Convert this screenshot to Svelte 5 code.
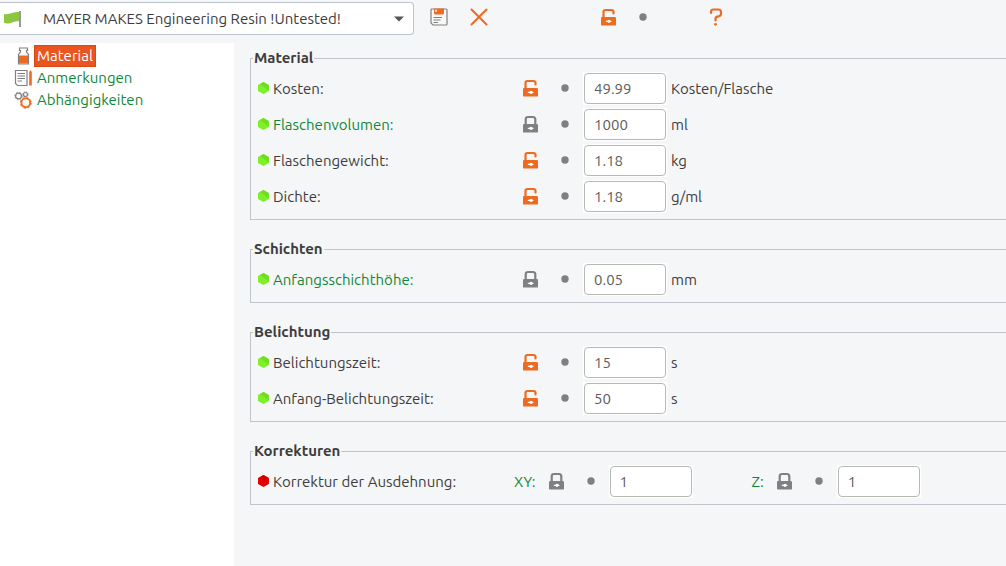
<script>
  const groups = [
    {
      title: 'Material',
      rows: [
        { name: 'Kosten:', fields: [{ id: 'cost', value: '49.99', open: true, unit: 'Kosten/Flasche' }] },
        { name: 'Flaschenvolumen:', system: true, fields: [{ id: 'volume', value: '1000', unit: 'ml' }] },
        { name: 'Flaschengewicht:', fields: [{ id: 'weight', value: '1.18', open: true, unit: 'kg' }] },
        { name: 'Dichte:', fields: [{ id: 'density', value: '1.18', open: true, unit: 'g/ml' }] }
      ]
    },
    {
      title: 'Schichten',
      rows: [{ name: 'Anfangsschichthöhe:', system: true, fields: [{ id: 'layer', value: '0.05', unit: 'mm' }] }]
    },
    {
      title: 'Belichtung',
      rows: [
        { name: 'Belichtungszeit:', fields: [{ id: 'exposure', value: '15', open: true, unit: 's' }] },
        { name: 'Anfang-Belichtungszeit:', fields: [{ id: 'initial', value: '50', open: true, unit: 's' }] }
      ]
    },
    {
      title: 'Korrekturen',
      rows: [
        {
          name: 'Korrektur der Ausdehnung:',
          expert: true,
          fields: [
            { id: 'xy', axis: 'XY:', value: '1' },
            { id: 'z', axis: 'Z:', value: '1' }
          ]
        }
      ]
    }
  ];
  const pages = ['Material', 'Anmerkungen', 'Abhängigkeiten'];
  let page = $state('Material');
</script>

{#snippet lock(open)}
  <svg class="lock" class:open width="16" height="18" viewBox="0 0 16 18" aria-hidden="true">
    {#if open}
      <path d="M2.5 9V4Q2.5 2 4.5 2H10.5Q12.5 2 12.5 4V5.5" fill="none" stroke="currentColor" stroke-width="2.2" stroke-linecap="round" />
    {:else}
      <path d="M2.7 9V4.4Q2.7 2 5.1 2H9.9Q12.3 2 12.3 4.4V9" fill="none" stroke="currentColor" stroke-width="2.2" />
    {/if}
    <rect x="0" y="9" width="15" height="8.6" rx="1.2" fill="currentColor" />
    <path d="M5.3 13.3H10" stroke="#fff" stroke-width="1.2" stroke-linecap="round" />
    <circle cx="8" cy="13.3" r="1.6" fill="#fff" />
  </svg>
{/snippet}

{#snippet control(open)}
  <button type="button" class="icon" aria-label="Systemwert">{@render lock(open)}</button>
  <button type="button" class="icon dot" aria-label="Zurücksetzen"><svg width="8" height="8" viewBox="0 0 8 8"><circle cx="4" cy="4" r="3.7" fill="#808080" /></svg></button>
{/snippet}

<div class="app">
  <header>
    <div class="preset">
      <svg class="flag" width="18" height="18" viewBox="0 0 18 18" aria-hidden="true">
        <path d="M0 4Q4 4.5 8 3T15 2V11Q11 11 8 12.5T0 13Z" fill="#8dc63f" />
        <path d="M16 1V17" stroke="#808080" stroke-width="1.6" />
      </svg>
      <select aria-label="Materialprofil">
        <option>MAYER MAKES Engineering Resin !Untested!</option>
      </select>
      <svg class="arrow" width="10" height="6" viewBox="0 0 10 6" aria-hidden="true"><path d="M0 .5H10L5 5.5Z" fill="#555" /></svg>
    </div>
    <button type="button" class="icon save" aria-label="Speichern">
      <svg width="18" height="18" viewBox="0 0 18 18">
        <path d="M2 1H16Q17 1 17 2V16Q17 17 16 17H3L1 15V2Q1 1 2 1Z" fill="#f8f8f9" stroke="#808080" stroke-width="1.2" />
        <path d="M4 .5H14V5Q14 6.5 12.5 6.5H5.5Q4 6.5 4 5Z" fill="#ed6b21" />
        <path d="M6 1.5V4" stroke="#fff" stroke-width="1.3" />
        <path d="M3.5 9.5H12M3.5 12H10.5M3.5 14.5H8" stroke="#808080" />
      </svg>
    </button>
    <button type="button" class="icon remove" aria-label="Löschen">
      <svg width="18" height="18" viewBox="0 0 18 18"><path d="M1.5 1.5L16.5 16.5M16.5 1.5L1.5 16.5" stroke="#ed6b21" stroke-width="2" stroke-linecap="round" /></svg>
    </button>
    <div class="state">{@render control(true)}</div>
    <button type="button" class="icon help" aria-label="Hilfe">
      <svg width="14" height="18" viewBox="0 0 14 18">
        <path d="M2 5V4Q2 1.5 4.5 1.5H9.5Q12 1.5 12 4V5.5Q12 8 9.5 8.3Q6.5 8.5 6.5 11V12.5" fill="none" stroke="#ed6b21" stroke-width="2.2" stroke-linecap="round" />
        <circle cx="6.5" cy="16.3" r="1.4" fill="#ed6b21" />
      </svg>
    </button>
  </header>

  <div class="body">
    <nav>
      {#each pages as name, i}
        <button type="button" class="page" class:selected={page === name} onclick={() => (page = name)}>
          <svg width="18" height="18" viewBox="0 0 18 18" fill="none" stroke="#808080" stroke-width="1.2" aria-hidden="true">
            {#if i === 0}
              <path d="M5.5 1H13.5V3.5H12.5V5L14.5 7.5V17H4.5V7.5L6.5 5V3.5H5.5Z" fill="#fff" />
              <path d="M5 8.5H14V16.5H5Z" fill="#ed6b21" stroke="none" />
            {:else if i === 1}
              <path d="M1.5 1.5H13V16.5H3.5L1.5 14.5Z" />
              <path d="M3.5 4.5H11M3.5 7H11M3.5 9.5H11M3.5 12H8" />
              <path d="M15.2 3L16.4 1L17.8 3V16.5H15.2Z" fill="#ed6b21" stroke="none" />
            {:else}
              <circle cx="4.5" cy="5" r="2.9" stroke-width="1.3" />
              <circle cx="4.5" cy="5" r="3.8" stroke-width="0.8" stroke-dasharray="1.5 1.5" />
              <circle cx="11.5" cy="3.5" r="2" stroke-width="1.2" />
              <circle cx="11.5" cy="3.5" r="2.8" stroke-width="0.8" stroke-dasharray="1.1 1.1" />
              <circle cx="11.8" cy="11.8" r="4.4" stroke="#ed6b21" stroke-width="1.9" />
              <circle cx="11.8" cy="11.8" r="5.5" stroke="#ed6b21" stroke-width="1" stroke-dasharray="2.16 2.16" />
            {/if}
          </svg>
          <span>{name}</span>
        </button>
      {/each}
    </nav>

    <main>
      {#each groups as group}
        <fieldset>
          <legend>{group.title}</legend>
          {#each group.rows as row}
            <div class="row">
              <svg class="mode" width="11" height="12" viewBox="0 0 11 12" aria-hidden="true">
                <path d="M5.5 0L10.8 3V9L5.5 12L0 9V3Z" fill={row.expert ? '#e70000' : '#7df028'} />
                <path d="M2 2L5.5 0L10.8 3V8.5Z" fill={row.expert ? '#d40000' : '#72dc25'} />
              </svg>
              <label class="name" class:system={row.system} for={row.fields[0].id}>{row.name}</label>
              {#each row.fields as field}
                <div class="field" class:with-axis={field.axis}>
                  {#if field.axis}<label class="axis system" for={field.id}>{field.axis}</label>{/if}
                  {@render control(field.open)}
                  <span class="box"><input id={field.id} type="text" value={field.value} /></span>
                  {#if field.unit}<span class="unit">{field.unit}</span>{/if}
                </div>
              {/each}
            </div>
          {/each}
        </fieldset>
      {/each}
    </main>
  </div>
</div>

<style>
  :global(body) {
    margin: 0;
    background: #f5f6f7;
  }
  .app {
    display: flex;
    flex-direction: column;
    min-height: 100vh;
    overflow: hidden;
    color: #3d3d3d;
    background: #f5f6f7;
    font: 15px/20px Ubuntu, 'Noto Sans', sans-serif;
  }
  button, input, select {
    box-sizing: border-box;
    margin: 0;
    font: inherit;
    color: inherit;
  }
  svg {
    display: block;
    flex: none;
  }
  header {
    display: flex;
    align-items: flex-start;
    height: 41px;
    padding-top: 2px;
  }
  .preset {
    display: grid;
    align-items: center;
    width: 414px;
    flex: none;
  }
  .preset > * {
    grid-area: 1 / 1;
  }
  .preset svg {
    z-index: 1;
    pointer-events: none;
  }
  .flag {
    margin-left: 4px;
  }
  .arrow {
    justify-self: end;
    margin-right: 10px;
  }
  select {
    appearance: none;
    width: 100%;
    height: 33px;
    padding: 0 30px 0 43px;
    border: 1px solid #bcc5cd;
    border-left: 0;
    border-radius: 0 4px 4px 0;
    background: #fff;
  }
  .icon {
    display: block;
    flex: none;
    padding: 0;
    border: 0;
    background: none;
  }
  .save {
    margin: 6px 0 0 16px;
  }
  .remove {
    margin: 6px 0 0 22px;
  }
  .state {
    display: flex;
    align-items: center;
    margin: 6px 0 0 113px;
  }
  .help {
    margin: 6px 0 0 62px;
  }
  .lock {
    color: #808080;
  }
  .lock.open {
    color: #ed6b21;
  }
  .dot {
    margin-left: 22px;
  }
  .body {
    display: flex;
    flex: 1;
  }
  nav {
    flex: none;
    box-sizing: border-box;
    width: 234px;
    padding: 2px 0 0 14px;
    background: #fff;
  }
  .page {
    display: flex;
    align-items: center;
    gap: 2px;
    height: 22px;
    padding: 0;
    border: 0;
    background: none;
    color: #128738;
  }
  .page span {
    padding: 0 2px;
    border: 1px solid transparent;
  }
  .selected span {
    border-color: #d9480f;
    background: #e95420;
    color: #fff;
  }
  main {
    flex: 1;
    min-width: 0;
    padding: 6px 0 0 16px;
  }
  fieldset {
    min-width: 0;
    margin: 0 0 20px;
    padding: 2px 0 5px 7px;
    border: 1px solid #c0c4cb;
    border-right: 0;
  }
  legend {
    height: 19px;
    margin-left: -5px;
    padding: 0 1px;
    font-weight: 700;
    line-height: 18px;
  }
  .row {
    display: flex;
    align-items: center;
    height: 36px;
  }
  .name, .axis, .unit {
    padding-top: 2px;
  }
  .name {
    flex: none;
    width: 241px;
    margin-left: 4px;
  }
  .system {
    color: #128738;
  }
  .field {
    display: flex;
    align-items: center;
    margin-left: 9px;
  }
  .field.with-axis {
    margin-left: 0;
  }
  .field.with-axis + .with-axis {
    margin-left: 59px;
  }
  .axis {
    margin-right: 13px;
  }
  .box {
    flex: none;
    margin-left: 14px;
    padding: 1px;
    background: #fff;
  }
  input {
    display: block;
    width: 82px;
    height: 31px;
    padding: 0 9px;
    border: 1px solid #b8b8b4;
    border-radius: 4px;
    background: #fff;
    color: #5c5c5c;
  }
  .unit {
    margin-left: 4px;
  }
</style>
